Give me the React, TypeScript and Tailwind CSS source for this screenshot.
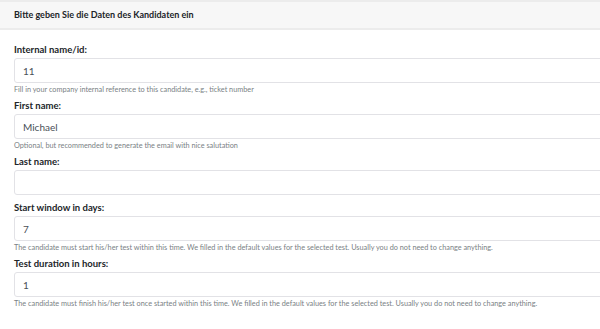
import React from "react";

interface FieldProps {
  label: string;
  value: string;
  help?: string;
}

const Field: React.FC<FieldProps> = ({ label, value, help }) => (
  <div className={help ? "mb-[2px]" : "mb-[5px]"}>
    <label className="block text-[9.5px] leading-[16px] font-bold text-[#212529]">
      {label}
    </label>
    <input
      type="text"
      defaultValue={value}
      className="block w-full h-[25px] rounded-[3px] border border-[#e2e2e6] bg-white px-[8px] text-[10px] text-[#495057] outline-none"
    />
    {help && (
      <p className="mt-[1px] text-[7.3px] leading-[12px] text-[#7a7f85]">
        {help}
      </p>
    )}
  </div>
);

export default function App() {
  return (
    <div
      className="w-[600px] h-[329px] overflow-hidden bg-white"
      style={{ fontFamily: "Lato, 'Open Sans', sans-serif" }}
    >
      <div className="w-[660px]">
        <div className="h-[30px] flex items-center px-[14px] bg-[#f7f7f7] border-t-2 border-b-2 border-[#ececec] text-[9px] font-bold text-[#212529]">
          Bitte geben Sie die Daten des Kandidaten ein
        </div>
        <div className="pl-[14px] pt-[12px]">
          <Field
            label="Internal name/id:"
            value="11"
            help="Fill in your company internal reference to this candidate, e.g., ticket number"
          />
          <Field
            label="First name:"
            value="Michael"
            help="Optional, but recommended to generate the email with nice salutation"
          />
          <Field label="Last name:" value="" />
          <Field
            label="Start window in days:"
            value="7"
            help="The candidate must start his/her test within this time. We filled in the default values for the selected test. Usually you do not need to change anything."
          />
          <Field
            label="Test duration in hours:"
            value="1"
            help="The candidate must finish his/her test once started within this time. We filled in the default values for the selected test. Usually you do not need to change anything."
          />
        </div>
      </div>
    </div>
  );
}
